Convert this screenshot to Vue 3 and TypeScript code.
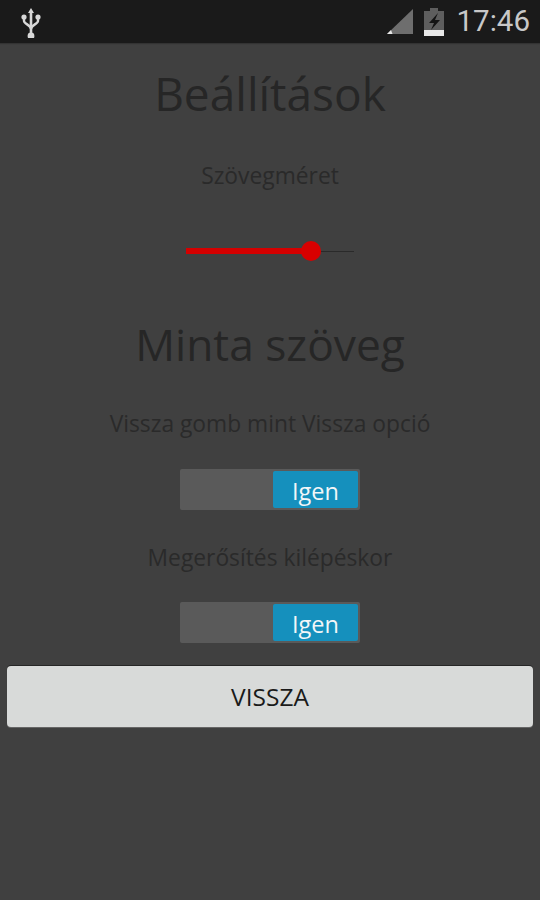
<script setup lang="ts">
const toggles: string[] = ['Vissza gomb mint Vissza opció', 'Megerősítés kilépéskor']
const sliderPercent = 74.6
</script>

<template>
  <div class="screen">
    <header class="status">
      <svg class="usb" width="24" height="32" viewBox="0 0 24 32">
        <path d="M12 5V31" stroke="#d8d8d8" stroke-width="2.6" fill="none" />
        <path d="M12 2l3 5H9z" fill="#d8d8d8" />
        <path d="M5 11v4c0 3 7 4 7 8 0-4 7-5 7-8v-4" stroke="#d8d8d8" stroke-width="2.4" fill="none" />
        <circle cx="5" cy="11" r="2.6" fill="#d8d8d8" />
        <circle cx="19" cy="11" r="2.6" fill="#d8d8d8" />
        <circle cx="12" cy="30" r="3.400" fill="#d8d8d8" />
      </svg>
      <div class="right">
        <svg width="28" height="28" viewBox="0 0 28 28">
          <path d="M28 1V26H2z" fill="#6e6e6e" />
          <path d="M2 26l4-4 1.500 4z" fill="#e8e8e8" />
        </svg>
        <svg class="battery" width="22" height="30" viewBox="0 0 22 30">
          <path d="M7 1h8v3h6v25H1V4h6z" fill="#5e5e5e" />
          <rect x="1" y="23" width="20" height="6" fill="#e8e8e8" />
          <path d="M15 6L6 16h5l-3 7 9-10h-5l3-7z" fill="#141414" />
        </svg>
        <span class="time">17:46</span>
      </div>
    </header>

    <main class="content">
      <h1 class="title">Beállítások</h1>
      <p class="label size-label">Szövegméret</p>
      <div class="slider">
        <div class="track"></div>
        <div class="fill" :style="{ width: sliderPercent + '%' }"></div>
        <div class="thumb" :style="{ left: sliderPercent + '%' }"></div>
      </div>
      <p class="sample">Minta szöveg</p>

      <section v-for="t in toggles" :key="t" class="option">
        <p class="label">{{ t }}</p>
        <div class="toggle">
          <span class="on">Igen</span>
        </div>
      </section>

      <button class="back" type="button">VISSZA</button>
    </main>
  </div>
</template>

<style>
html, body { margin: 0; background: #404040; }
</style>

<style scoped>
.screen {
  width: 540px;
  height: 900px;
  background: #404040;
  font-family: "Open Sans", "Noto Sans", sans-serif;
  overflow: hidden;
  display: flex;
  flex-direction: column;
}
.status {
  height: 43px;
  flex: none;
  background: #1a1a1a;
  display: flex;
  align-items: center;
  justify-content: space-between;
  padding: 0 10px 0 19px;
  box-sizing: border-box;
  box-shadow: 0 1px 1px #333;
}
.right { display: flex; align-items: center; }
.battery { margin-left: 10px; }
.time {
  margin-left: 12px;
  color: #c8c8c8;
  font: 400 29.500px/43px Roboto, sans-serif;
}
.content {
  display: flex;
  flex-direction: column;
  align-items: center;
}
.title {
  margin: 20px 0 0;
  font-size: 46px;
  font-weight: 400;
  line-height: 60px;
  color: #262626;
}
.label {
  margin: 0;
  font-size: 22.800px;
  line-height: 30px;
  color: #2a2a2a;
}
.size-label { margin-top: 38px; }
.slider {
  position: relative;
  width: 168px;
  height: 24px;
  margin-top: 49px;
}
.track {
  position: absolute;
  left: 0;
  right: 0;
  top: 11px;
  height: 1px;
  background: #2a2a2a;
}
.fill {
  position: absolute;
  left: 0;
  top: 8px;
  height: 6px;
  background: #d40000;
}
.thumb {
  position: absolute;
  top: 1px;
  width: 20px;
  height: 20px;
  margin-left: -10px;
  border-radius: 50%;
  background: #d80000;
}
.sample {
  margin: 50px 0 0;
  font-size: 44.300px;
  line-height: 60px;
  color: #262626;
}
.option {
  display: flex;
  flex-direction: column;
  align-items: center;
}
.sample + .option { margin-top: 35px; }
.option + .option { margin-top: 33px; }
.toggle {
  width: 180px;
  height: 41px;
  margin-top: 30px;
  box-sizing: border-box;
  padding: 2px;
  background: #5a5a5a;
  border-radius: 2px;
  display: flex;
  justify-content: flex-end;
}
.option + .option .toggle { margin-top: 29px; }
.on {
  width: 85px;
  background: #1590bd;
  border-radius: 2px;
  color: #f2f6f8;
  font-size: 23.500px;
  line-height: 41px;
  text-align: center;
}
.back {
  width: 526px;
  height: 61px;
  margin-top: 23px;
  border: 0;
  border-radius: 4px;
  background: #d8dad9;
  color: #1a1a1a;
  font: inherit;
  font-size: 24.500px;
  box-shadow: 0 -1px 0 #262626, 0 1px 0 #666;
}
</style>
